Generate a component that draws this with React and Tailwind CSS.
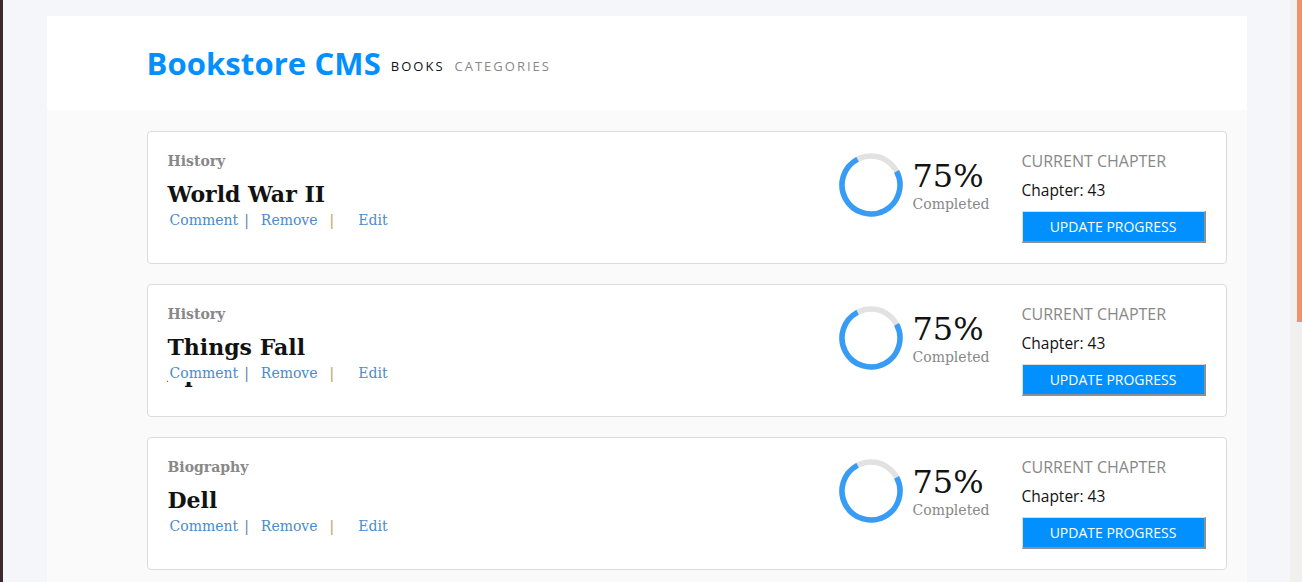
import React from 'react';

const books = [
  { genre: 'History', title: 'World War II' },
  { genre: 'History', title: 'Things Fall Apart' },
  { genre: 'Biography', title: 'Dell' },
];

const Ring = () => (
  <svg width="64" height="64" viewBox="0 0 64 64" className="shrink-0">
    <circle cx="32" cy="32" r="29" fill="none" stroke="#e2e2e2" strokeWidth="5.5" />
    <circle
      cx="32"
      cy="32"
      r="29"
      fill="none"
      stroke="#379cf6"
      strokeWidth="5.5"
      strokeDasharray={`${0.75 * 2 * Math.PI * 29} ${2 * Math.PI * 29}`}
      transform="rotate(-28 32 32)"
    />
  </svg>
);

const BookCard = ({ book }) => (
  <div className="h-[133px] bg-white border border-[#dcdcdc] rounded-[4px] flex justify-between pl-[20px] pr-[20px] pt-[20px]">
    {/* left side */}
    <div className="flex flex-col font-['DejaVu_Serif',serif]">
      <div className="text-[14px] leading-[18px] font-bold text-[#888]">{book.genre}</div>
      <div className="w-[180px] h-[29px] mt-[11px] text-[22px] leading-[27px] font-bold text-[#121212]">
        {book.title}
      </div>
      <div className="relative bg-white flex items-center text-[14px] leading-[18px] text-[#4a8bcb] pl-[2px] h-[19px]">
        <span>Comment</span>
        <span className="ml-[6px] text-[#5c7ea6]">|</span>
        <span className="ml-[12px]">Remove</span>
        <span className="ml-[12px] text-[#c79558]">|</span>
        <span className="ml-[24px]">Edit</span>
      </div>
    </div>

    {/* right side */}
    <div className="flex">
      <div className="flex items-start mt-[1px]">
        <Ring />
        <div className="ml-[9px] flex flex-col font-['DejaVu_Serif',serif]">
          <span className="text-[32px] leading-[36px] font-light text-[#121212] mt-[5px]">75%</span>
          <span className="text-[14px] leading-[16px] text-[#888] mt-[2px]">Completed</span>
        </div>
      </div>
      <div className="ml-[32px] w-[184px] flex flex-col font-['Open_Sans',sans-serif]">
        <span className="text-[16px] leading-[18px] text-[#888]">CURRENT CHAPTER</span>
        <span className="text-[15.5px] leading-[18px] text-[#121212] mt-[11px]">Chapter: 43</span>
        <button className="mt-[12px] w-[184px] h-[32px] bg-[#0290ff] text-white text-[14px] border-t border-l border-t-[#dcdcdc] border-l-[#dcdcdc] border-r-2 border-b-2 border-r-[#8f8f8f] border-b-[#8f8f8f] flex items-center justify-center">
          UPDATE PROGRESS
        </button>
      </div>
    </div>
  </div>
);

const App = () => {
  return (
    <div className="w-full h-[582px] overflow-hidden flex">
      <div className="w-[3px] bg-[#3b2b2e]"></div>
      <div className="flex-1 bg-[#f5f6fa] pt-[16px]">
        <div className="w-[1200px] mx-auto">
          <header className="h-[94px] bg-white flex items-center pl-[100px]">
            <h1 className="font-['Open_Sans',sans-serif] font-bold text-[31px] tracking-[0.1px] text-[#0290ff] leading-none mt-[1px]">
              Bookstore CMS
            </h1>
            <nav className="ml-[10px] mt-[7px] flex gap-[10px] font-['Open_Sans',sans-serif] text-[13px] tracking-[2px]">
              <span className="text-[#121212]">BOOKS</span>
              <span className="text-[#888]">CATEGORIES</span>
            </nav>
          </header>
          <main className="bg-[#fafafa] pl-[100px] pr-[20px] pt-[21px] pb-[20px] flex flex-col gap-[20px]">
            {books.map((book, i) => (
              <BookCard key={i} book={book} />
            ))}
          </main>
        </div>
      </div>
      <div className="w-[12px] bg-[#f1f0ee] flex justify-end">
        <div className="w-[5px] h-[322px] bg-[#f0916a]"></div>
      </div>
    </div>
  );
};

export default App;
